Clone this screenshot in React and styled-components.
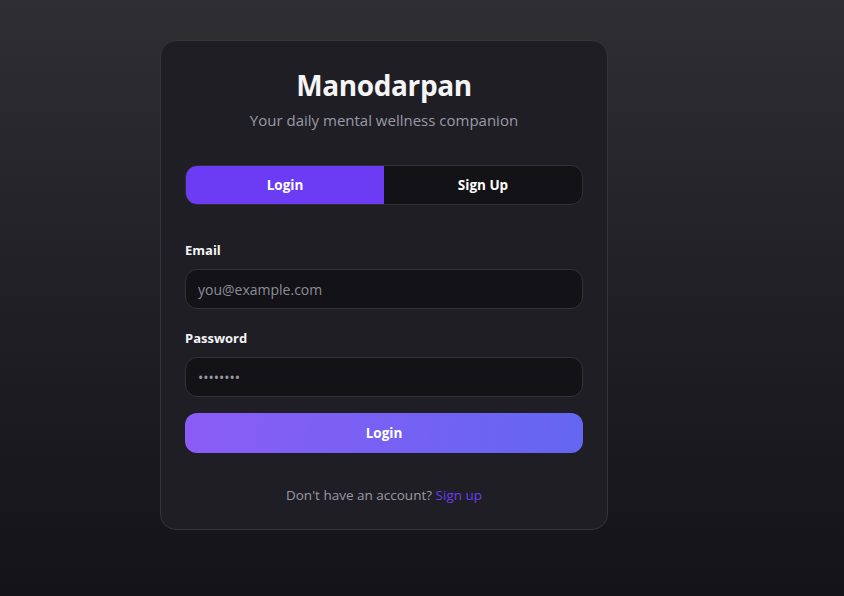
import React from "react";
import styled, { createGlobalStyle } from "styled-components";

const Global = createGlobalStyle`
  html, body { margin: 0; padding: 0; }
  body {
    min-height: 596px;
    background: linear-gradient(180deg, #2f2e33 0%, #1f1e23 55%, #141318 100%);
    font-family: "Open Sans", "Noto Sans", sans-serif;
    color: #f4f4f6;
  }
`;

const Page = styled.main`
  display: flex;
  align-items: flex-start;
  padding: 40px 0 0 160px;
  min-height: 556px;
`;

const Card = styled.section`
  width: 448px;
  box-sizing: border-box;
  background: #1f1e24;
  border: 1px solid #35343a;
  border-radius: 16px;
  padding: 24px 24px 24px;
  display: flex;
  flex-direction: column;
`;

const Title = styled.h1`
  margin: 0;
  text-align: center;
  font-size: 28px;
  line-height: 40px;
  font-weight: 700;
  color: #f5f5f7;
  letter-spacing: -0.4px;
`;

const Subtitle = styled.p`
  margin: 4px 0 0;
  text-align: center;
  font-size: 15px;
  line-height: 22px;
  color: #9a9aa6;
`;

const Tabs = styled.div`
  margin-top: 34px;
  display: grid;
  grid-template-columns: 1fr 1fr;
  height: 40px;
  border: 1px solid #302f35;
  border-radius: 12px;
  overflow: hidden;
  box-sizing: border-box;
  background: #131217;
`;

const Tab = styled.button`
  border: none;
  margin: 0;
  font-family: inherit;
  font-size: 13.5px;
  font-weight: 700;
  color: #ffffff;
  background: ${(p) => (p.$active ? "#6c3cf5" : "transparent")};
  cursor: pointer;
`;

const Form = styled.form`
  margin-top: 36px;
  display: flex;
  flex-direction: column;
`;

const Label = styled.label`
  font-size: 13px;
  font-weight: 700;
  line-height: 18px;
  color: #f4f4f6;
  margin-top: ${(p) => p.$gap || 0}px;
`;

const Input = styled.input`
  margin-top: 10px;
  height: 40px;
  box-sizing: border-box;
  background: #131217;
  border: 1px solid #33323a;
  border-radius: 12px;
  padding: 0 12px;
  font-family: inherit;
  font-size: 14px;
  color: #9a9aa6;
  outline: none;
  &::placeholder { color: #8d8d98; }
`;

const Submit = styled.button`
  margin-top: 16px;
  height: 40px;
  border: none;
  border-radius: 12px;
  background: linear-gradient(100deg, #8b5cf6 0%, #6366f1 100%);
  color: #ffffff;
  font-family: inherit;
  font-size: 13.5px;
  font-weight: 700;
  cursor: pointer;
`;

const Footer = styled.p`
  margin: 32px 0 0;
  text-align: center;
  font-size: 13.5px;
  line-height: 20px;
  color: #9a9aa6;
`;

const Link = styled.a`
  color: #6d3cf5;
  text-decoration: none;
`;

export default function App() {
  return (
    <>
      <Global />
      <Page>
        <Card>
          <Title>Manodarpan</Title>
          <Subtitle>Your daily mental wellness companion</Subtitle>
          <Tabs>
            <Tab $active type="button">Login</Tab>
            <Tab type="button">Sign Up</Tab>
          </Tabs>
          <Form onSubmit={(e) => e.preventDefault()}>
            <Label>Email</Label>
            <Input type="email" placeholder="you@example.com" />
            <Label $gap={20}>Password</Label>
            <Input type="password" defaultValue="password" />
            <Submit type="submit">Login</Submit>
          </Form>
          <Footer>
            Don't have an account? <Link href="#">Sign up</Link>
          </Footer>
        </Card>
      </Page>
    </>
  );
}
